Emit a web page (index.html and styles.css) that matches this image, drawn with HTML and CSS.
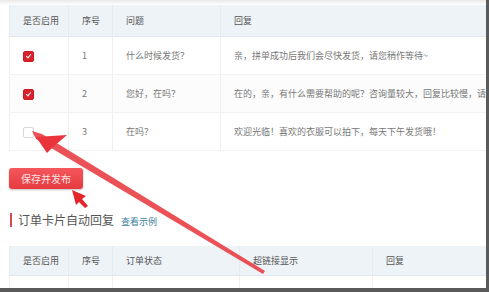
FILE: index.html
```html
<!DOCTYPE html>
<html lang="zh-CN">
<head>
  <meta charset="UTF-8">
  <meta name="viewport" content="width=device-width, initial-scale=1.0">
  <title>自动回复设置</title>
  <link rel="stylesheet" href="styles.css">
</head>
<body>
  <div class="frame">
    <div class="content">
      <!-- 常见问题 -->
      <table class="grid">
        <colgroup>
          <col style="width:59px"><col style="width:44px"><col style="width:108px"><col>
        </colgroup>
        <thead>
          <tr><th>是否启用</th><th>序号</th><th>问题</th><th>回复</th></tr>
        </thead>
        <tbody>
          <tr>
            <td><span class="check on"></span></td>
            <td>1</td>
            <td>什么时候发货？</td>
            <td>亲，拼单成功后我们会尽快发货，请您稍作等待~</td>
          </tr>
          <tr>
            <td><span class="check on"></span></td>
            <td>2</td>
            <td>您好，在吗？</td>
            <td>在的，亲，有什么需要帮助的呢？咨询量较大，回复比较慢，请</td>
          </tr>
          <tr>
            <td><span class="check"></span></td>
            <td>3</td>
            <td>在吗？</td>
            <td>欢迎光临！喜欢的衣服可以拍下，每天下午发货哦！</td>
          </tr>
        </tbody>
      </table>

      <button class="save-button">保存并发布</button>

      <div class="section-title">
        <span class="title-text">订单卡片自动回复</span>
        <a href="javascript:void(0);" class="title-link">查看示例</a>
      </div>

      <!-- 订单卡片 -->
      <table class="grid grid-order">
        <colgroup>
          <col style="width:59px"><col style="width:44px"><col style="width:127px"><col style="width:133px"><col>
        </colgroup>
        <thead>
          <tr><th>是否启用</th><th>序号</th><th>订单状态</th><th>超链接显示</th><th>回复</th></tr>
        </thead>
        <tbody>
          <tr><td></td><td></td><td></td><td></td><td></td></tr>
        </tbody>
      </table>
    </div>

    <!-- 标注箭头 -->
    <svg class="marks" width="486" height="288" viewBox="0 0 486 288">
      <polygon points="32,131 42,134 265,271 263,274 36,139" fill="#e8343a" opacity="0.85"/>
      <polygon points="36,137 67,135 60,141 53,147 47,153" fill="#e8343a"/>
      <polygon points="72,190 86,196 82,199 88,206 85,208 79,202 76,205" fill="#e4262c"/>
    </svg>
  </div>
</body>
</html>
```

FILE: styles.css
```css
body {
  margin: 0;
  background: #fff;
  font-family: "Noto Sans CJK SC", "DejaVu Sans", sans-serif;
  color: #777;
}

.frame {
  position: relative;
  width: 486px;
  height: 288px;
  border-right: 3px solid #5a5a5a;
  border-bottom: 4px solid #5a5a5a;
  overflow: hidden;
  background: linear-gradient(#e9e9e9, #fff 5px);
}

.content {
  padding: 5px 0 0 9px;
}

.grid {
  width: 477px;
  border-collapse: collapse;
  table-layout: fixed;
  font-size: 9px;
  background: #fff;
}

.grid th {
  background: #eef3f8;
  color: #555;
  font-weight: normal;
  text-align: left;
  height: 31px;
  padding: 0 0 0 13px;
  border-left: 1px solid #e6ebf0;
  border-bottom: 1px solid #e3e8ee;
  white-space: nowrap;
}

.grid td {
  height: 37px;
  padding: 0 0 0 13px;
  border-left: 1px solid #f0f0f0;
  border-bottom: 1px solid #f2f2f2;
  white-space: nowrap;
  overflow: hidden;
}

.grid tbody tr:nth-child(2) td {
  background: #fcfcfc;
}

.check {
  display: inline-block;
  width: 9px;
  height: 9px;
  border: 1px solid #d8d8d8;
  border-radius: 2px;
  background: #fff;
  vertical-align: middle;
  position: relative;
}

.check.on {
  background: #d9222b;
  border-color: #c81d25;
}

.check.on::after {
  content: "";
  position: absolute;
  left: 3px;
  top: 1px;
  width: 2px;
  height: 4px;
  border: solid #fff;
  border-width: 0 1px 1px 0;
  transform: rotate(40deg);
}

.save-button {
  display: block;
  margin-top: 17px;
  width: 74px;
  height: 21px;
  padding: 0;
  border: none;
  border-radius: 3px;
  background: linear-gradient(#f4575c, #e63a40);
  color: #fde3e3;
  font-family: inherit;
  font-size: 10px;
  box-shadow: 0 1px 2px rgba(0, 0, 0, 0.25);
}

.section-title {
  display: flex;
  align-items: baseline;
  margin-top: 24px;
  height: 14px;
  border-left: 2px solid #d84a50;
  padding-left: 6px;
  margin-left: 1px;
}

.title-text {
  font-size: 12px;
  color: #555;
  line-height: 14px;
}

.title-link {
  margin-left: 7px;
  font-size: 9px;
  color: #3c7f9c;
  text-decoration: none;
}

.grid-order {
  margin-top: 19px;
}

.grid-order th {
  height: 29px;
}

.grid-order td {
  height: 13px;
}

.marks {
  position: absolute;
  left: 0;
  top: 0;
  pointer-events: none;
}
```
